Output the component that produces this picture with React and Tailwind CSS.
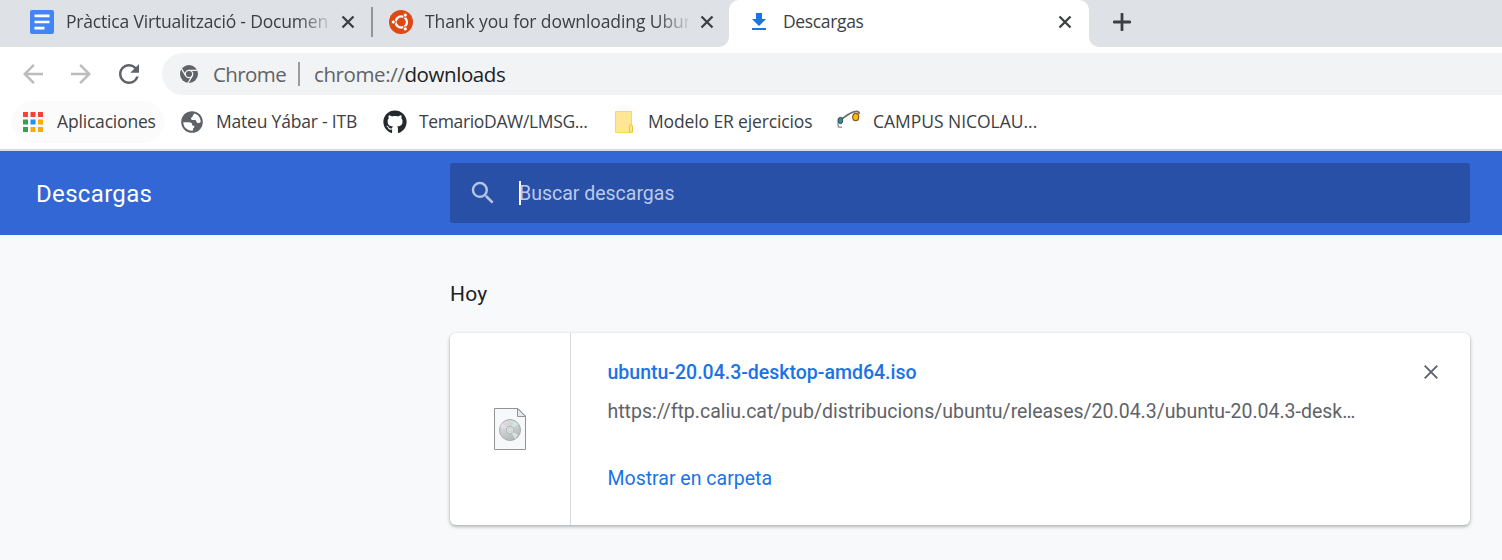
import { MdArrowBack, MdArrowForward, MdRefresh, MdSearch } from "react-icons/md";
import { FaGithub } from "react-icons/fa";

function DocsIcon() {
  return (
    <svg className="size-6 shrink-0" viewBox="0 0 24 24">
      <rect width="24" height="24" rx="2" fill="#4285f4" />
      <path d="M4.500 4.600h15v2.600h-15zM4.500 10.700h15v2.600h-15zM4.500 16.800h10v2.600h-10z" fill="#fff" />
    </svg>
  );
}

function UbuntuIcon() {
  return (
    <svg className="size-6 shrink-0" viewBox="0 0 24 24">
      <circle cx="12" cy="12" r="12" fill="#dd4814" />
      <circle cx="12.300" cy="12" r="5.600" fill="none" stroke="#fff" strokeWidth="2.400" />
      <g stroke="#dd4814" strokeWidth="1">
        <path d="M12.300 12H3M12.300 12l4.500 8M12.300 12l4.500-8" />
        <circle cx="4.300" cy="12" r="2.100" fill="#fff" />
        <circle cx="16.200" cy="5.100" r="2.100" fill="#fff" />
        <circle cx="16.200" cy="18.900" r="2.100" fill="#fff" />
      </g>
      <circle cx="12.300" cy="12" r="4.100" fill="#dd4814" />
    </svg>
  );
}

function DownloadIcon() {
  return (
    <svg className="h-[18px] w-3.5 shrink-0" viewBox="0 0 14 18">
      <path d="M4 0h6v6h4l-7 7-7-7h4zM0 15h14v2H0z" fill="#1a73e8" />
    </svg>
  );
}

function ChromeIcon() {
  return (
    <svg className="size-[18px] shrink-0" viewBox="0 0 18 18">
      <circle cx="9" cy="9" r="9" fill="#5f6368" />
      <circle cx="9" cy="9" r="3.700" fill="none" stroke="#f1f3f4" strokeWidth="1.300" />
      <path d="M9 5.300h8.500M5.800 10.900L1.600 3.900M12.200 10.900L8 18" stroke="#f1f3f4" strokeWidth="1.300" />
    </svg>
  );
}

function GlobeIcon() {
  return (
    <svg className="size-[22px] shrink-0" viewBox="0 0 22 22">
      <circle cx="11" cy="11" r="10.800" fill="#5f6368" />
      <path d="M2.300 11.200h5.200c2.300 0 3.600.8 3.600 2.400 0 .9.500 1.100 1.300 1.100 1 0 1.100.6 1 1.400-.2.900-1.400 1-1.400 2v1.500c-5 .6-9.700-3-9.700-8.400z" fill="#fff" />
      <path d="M13.200 2.500c3.600.8 6.400 4 6.500 8.200-.9 1.200-1.800 1.400-2.700 1.400-1.500 0-1.600-1.200-1.700-2-.1-.9-1-1-2.400-1-2 0-2.900-.4-2.900-1.500 0-1.200 1.400-1 1.600-2 .1-1.200 1-1.300 1.600-3.100z" fill="#fff" />
    </svg>
  );
}

function AppsIcon() {
  return (
    <svg className="size-5 shrink-0" viewBox="0 0 20 20">
      <path d="M0 0h5v5H0zM7.500 0h5v5h-5zM15 0h5v5h-5z" fill="#fa3e38" />
      <path d="M0 7.500h5v5H0zM0 15h5v5H0z" fill="#34a054" />
      <path d="M7.500 7.500h5v5h-5z" fill="#1e90ff" />
      <path d="M15 7.500h5v5h-5zM7.500 15h5v5h-5zM15 15h5v5h-5z" fill="#fbab05" />
    </svg>
  );
}

function FolderIcon() {
  return (
    <svg className="h-[22px] w-[18px] shrink-0" viewBox="0 0 18 22">
      <path d="M.5.5h16v14h1v7H.5z" fill="#ffe694" stroke="#fbd75b" />
      <path d="M14.500 21v-5.500a1.500 1.500 0 0 1 3 0V21z" fill="#ffe694" stroke="#edc53f" />
    </svg>
  );
}

function CampusIcon() {
  return (
    <svg className="size-6 shrink-0" viewBox="0 0 24 24">
      <path d="M4 9.500C9 6 14 1.500 19 1.300q3-.2 3.500 2.500" fill="none" stroke="#6f6f6f" strokeWidth="1.700" />
      <path d="M1.500 8q-1 5 0 9l3.500 .3" fill="none" stroke="#999" strokeWidth="1.500" />
      <ellipse cx="3.500" cy="10.500" rx="2.200" ry="3.200" fill="#2a91a0" stroke="#3c4a4c" />
      <ellipse cx="18.700" cy="7" rx="3" ry="3.600" fill="#ffbd08" stroke="#8a5a14" strokeWidth="1.200" />
    </svg>
  );
}

function DiscFileIcon() {
  return (
    <svg className="h-[42px] w-8" viewBox="0 0 32 42">
      <defs>
        <linearGradient id="disc" x1="0" y1="0" x2="0.500" y2="1">
          <stop offset="0" stopColor="#e4e4e6" />
          <stop offset="0.500" stopColor="#cdd2d2" />
          <stop offset="1" stopColor="#b4b9ba" />
        </linearGradient>
      </defs>
      <path d="M.5.5h23.500l7.500 7.500v33.500H.5z" fill="#f7f8f9" stroke="#929495" />
      <path d="M23.500 .5V8.500h8z" fill="#e6e7e8" stroke="#929495" />
      <circle cx="16" cy="22" r="10.500" fill="url(#disc)" stroke="#a8acad" />
      <path d="M16 22l4-9 4 3z" fill="#c9f0dc" opacity=".8" />
      <path d="M16 22l-10-3 2-4z" fill="#eddcf0" opacity=".8" />
      <path d="M16 22l8 5-3 4z" fill="#e6e8e8" opacity=".8" />
      <circle cx="16" cy="22" r="3.700" fill="#dfe1e1" stroke="#b4b8b9" />
      <circle cx="16" cy="22" r="1.500" fill="#f6f6f6" stroke="#b4b8b9" strokeWidth=".7" />
    </svg>
  );
}

function CloseIcon() {
  return (
    <svg className="size-3.5 shrink-0" viewBox="0 0 14 14">
      <path d="M1.500 1.500l11 11M12.500 1.500l-11 11" stroke="#3c4043" strokeWidth="2.300" fill="none" />
    </svg>
  );
}

function Tabs() {
  return (
    <div className="flex h-[47px] bg-white text-[17.5px] leading-6 text-[#3c4043]">
      <div className="flex h-[47px] w-[729px] shrink-0 rounded-br-[10px] bg-[#dee1e6] pb-[3px]">
        <div className="flex w-[371px] items-center pl-[30px]">
          <DocsIcon />
          <span className="mb-0.5 ml-3 w-[263px] whitespace-nowrap tracking-[-0.18px] [mask-image:linear-gradient(to_right,black_88%,transparent_102%)]">
            Pràctica Virtualització - Documen
          </span>
          <span className="ml-3"><CloseIcon /></span>
        </div>
        <div className="mt-[7px] h-[30px] w-0.5 bg-[#919498]" />
        <div className="flex items-center pl-4">
          <UbuntuIcon />
          <span className="mb-0.5 ml-3 w-[263px] whitespace-nowrap tracking-[-0.1px] [mask-image:linear-gradient(to_right,black_88%,transparent_102%)]">
            Thank you for downloading Ubun
          </span>
          <span className="ml-3"><CloseIcon /></span>
        </div>
      </div>
      <div className="w-[360px] shrink-0 bg-[#dee1e6]">
        <div className="flex h-[47px] items-center rounded-t-[10px] bg-white pb-[3px] pl-[23px]">
          <DownloadIcon />
          <span className="mb-0.5 ml-[17px] w-[275px] tracking-[-0.35px]">Descargas</span>
          <CloseIcon />
        </div>
      </div>
      <div className="flex grow items-center rounded-bl-[10px] bg-[#dee1e6] pb-[3px] pl-6">
        <svg className="size-[18px]" viewBox="0 0 18 18">
          <path d="M9 1v16M1 9h16" stroke="#3c4043" strokeWidth="2.800" strokeLinecap="round" />
        </svg>
      </div>
    </div>
  );
}

function Toolbar() {
  return (
    <div className="flex h-[54px] items-start bg-white pt-1.5 pl-[18px]">
      <div className="flex h-[42px] items-center gap-[18px]">
        <MdArrowBack size={30} color="#babcbe" />
        <MdArrowForward size={30} color="#babcbe" />
        <MdRefresh size={30} color="#5f6368" />
      </div>
      <div className="ml-[18px] flex h-[42px] grow items-center rounded-l-full bg-[#f1f3f4] pl-[18px] text-[20.500px] text-[#5f6368]">
        <ChromeIcon />
        <span className="ml-[15px] w-[74px] whitespace-nowrap tracking-[-0.6px]">Chrome</span>
        <div className="ml-[11px] h-6 w-0.5 bg-[#9a9da1]" />
        <span className="ml-[14px] whitespace-nowrap tracking-[-0.4px]">
          chrome://<span className="text-[#202124]">downloads</span>
        </span>
      </div>
    </div>
  );
}

function Bookmarks() {
  return (
    <div className="flex h-[50px] items-start border-b-2 border-[#dadce0] bg-white text-[17.5px] leading-6 whitespace-nowrap text-[#3c4043]">
      <div className="ml-3 flex h-[42px] w-[152px] items-center rounded-full bg-[#fbfbfb] pl-[11px]">
        <AppsIcon />
        <span className="mb-0.5 ml-[14px] tracking-[-0.18px]">Aplicaciones</span>
      </div>
      <div className="flex h-[42px] w-[202px] items-center pl-[17px]">
        <GlobeIcon />
        <span className="mb-0.5 ml-[13px] tracking-[-0.2px]">Mateu Yábar - ITB</span>
      </div>
      <div className="flex h-[42px] w-[231px] items-center pl-[17px]">
        <FaGithub size={24} color="#24292e" className="shrink-0" />
        <span className="mb-0.5 ml-3 tracking-[-0.35px]">TemarioDAW/LMSG...</span>
      </div>
      <div className="flex h-[42px] w-[224px] items-center pl-[18px]">
        <FolderIcon />
        <span className="mb-0.5 ml-[15px] tracking-[-0.13px]">Modelo ER ejercicios</span>
      </div>
      <div className="flex h-[42px] items-center pl-4">
        <CampusIcon />
        <span className="mb-0.5 ml-3 tracking-[-0.03px]">CAMPUS NICOLAU...</span>
      </div>
    </div>
  );
}

function Header() {
  return (
    <header className="flex h-[84px] items-center bg-[#3367d6]">
      <h1 className="w-[450px] pt-0.5 pl-9 text-2xl tracking-[0.33px] text-white">Descargas</h1>
      <div className="flex h-[60px] w-[1020px] items-center rounded-[3px] bg-[#2850a7] pl-[18px]">
        <MdSearch size={30} color="#b7c5e3" />
        <div className="ml-[21px] h-6 w-0.5 bg-white" />
        <span className="-ml-0.5 pt-0.5 text-[19.5px] text-[#bccae8]">Buscar descargas</span>
      </div>
    </header>
  );
}

function DownloadCard() {
  return (
    <div className="flex h-48 w-[1020px] rounded-md bg-white shadow-[0_1px_3px_rgba(60,64,67,0.3),0_2px_4px_rgba(60,64,67,0.2)]">
      <div className="flex w-[121px] items-center justify-center border-r border-[#d8d9da]">
        <DiscFileIcon />
      </div>
      <div className="flex grow flex-col pt-7 pl-[36.5px] text-[19.5px] leading-6">
        <a className="font-medium text-[#1a73e8]">ubuntu-20.04.3-desktop-amd64.iso</a>
        <span className="mt-[15px] whitespace-nowrap text-[#5f6368]">
          https://ftp.caliu.cat/pub/distribucions/ubuntu/releases/20.04.3/ubuntu-20.04.3-desk…
        </span>
        <a className="mt-[43px] text-[#1a73e8]">Mostrar en carpeta</a>
      </div>
      <svg className="mt-8 mr-8 size-3.5" viewBox="0 0 14 14">
        <path d="M.7.7l12.600 12.600M13.300.7L.7 13.300" stroke="#5f6368" strokeWidth="1.900" fill="none" />
      </svg>
    </div>
  );
}

export default function App() {
  return (
    <div className="h-[560px] w-[1502px] overflow-hidden bg-[#f8f9fb]">
      <div className="font-['Open_Sans','Noto_Sans',sans-serif]">
        <Tabs />
        <Toolbar />
        <Bookmarks />
      </div>
      <div className="font-[Roboto,sans-serif]">
        <Header />
        <main className="pt-[46px] pl-[450px]">
          <h2 className="mb-[25px] h-[27px] text-[21px] leading-[27px] tracking-[0.2px] text-[#202124]">Hoy</h2>
          <DownloadCard />
        </main>
      </div>
    </div>
  );
}
